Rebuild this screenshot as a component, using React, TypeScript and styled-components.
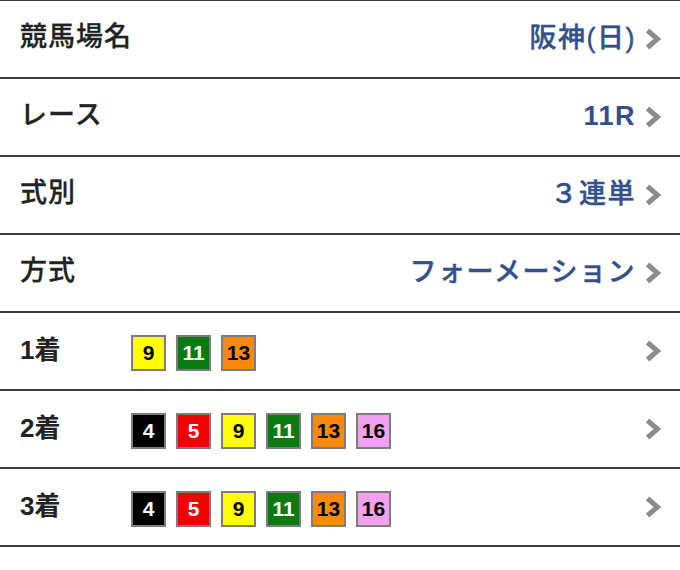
import React from "react";
import styled, { createGlobalStyle } from "styled-components";

const Global = createGlobalStyle`
  html, body { margin: 0; padding: 0; background: #fff; }
  body { font-family: "Noto Sans CJK JP", "Noto Sans", sans-serif; }
`;

const List = styled.div`
  border-top: 1px solid #3c3c3c;
  width: 680px;
`;

const Row = styled.div`
  height: 76px;
  border-bottom: 2px solid #3c3c3c;
  display: flex;
  align-items: center;
  padding: 0 19px 0 20px;
  box-sizing: content-box;
`;

const Label = styled.div<{ $fixed?: boolean }>`
  font-family: "Liberation Sans", "Noto Sans CJK JP", sans-serif;
  font-size: ${(p) => (p.$fixed ? "26px" : "27px")};
  font-weight: ${(p) => (p.$fixed ? 700 : 500)};
  letter-spacing: ${(p) => (p.$fixed ? "0" : "1px")};
  color: #222;
  line-height: 1;
  margin-top: -3px;
  -webkit-text-stroke: ${(p) => (p.$fixed ? "0" : "0.3px #222")};
  ${(p) => (p.$fixed ? "flex: 0 0 111px;" : "flex: 1 1 auto;")}
`;

const Value = styled.div`
  font-family: "Liberation Sans", "Noto Sans CJK JP", sans-serif;
  font-size: 27px;
  font-weight: 500;
  color: #32508c;
  letter-spacing: 1.5px;
  line-height: 1;
  margin-top: -1px;
  margin-right: -1px;
  -webkit-text-stroke: 0.4px #32508c;
`;

const Strong = styled.span`
  font-weight: 700;
  -webkit-text-stroke: 0;
`;

const Badges = styled.div`
  flex: 1 1 auto;
  display: flex;
  gap: 10px;
  margin-top: 4px;
`;

const Badge = styled.div<{ $bg: string; $fg: string }>`
  width: 31px;
  height: 32px;
  border: 2px solid #7d7d7d;
  background: ${(p) => p.$bg};
  color: ${(p) => p.$fg};
  display: flex;
  align-items: center;
  justify-content: center;
  font-family: "Liberation Sans", Arial, sans-serif;
  font-weight: 700;
  font-size: 21px;
`;

const Chevron = styled.svg`
  flex: 0 0 auto;
  width: 16px;
  height: 22px;
  margin-left: 10px;
`;

const colors: Record<number, [string, string]> = {
  4: ["#000000", "#ffffff"],
  5: ["#f20000", "#ffffff"],
  9: ["#ffff00", "#000000"],
  11: ["#0b7a10", "#ffffff"],
  13: ["#fb8a0c", "#000000"],
  16: ["#f2a0f2", "#000000"],
};

const Arrow = () => (
  <Chevron viewBox="0 0 16 22">
    <polyline
      points="2.5,2.5 12.5,11 2.5,19.5"
      fill="none"
      stroke="#8c8c8c"
      strokeWidth="5"
      strokeLinecap="butt"
      strokeLinejoin="miter"
    />
  </Chevron>
);

const settings: { label: string; value: React.ReactNode }[] = [
  { label: "競馬場名", value: "阪神(日)" },
  { label: "レース", value: <Strong>11R</Strong> },
  { label: "式別", value: "３連単" },
  { label: "方式", value: "フォーメーション" },
];

const places = [
  { label: "1着", nums: [9, 11, 13] },
  { label: "2着", nums: [4, 5, 9, 11, 13, 16] },
  { label: "3着", nums: [4, 5, 9, 11, 13, 16] },
];

export default function App() {
  return (
    <>
      <Global />
      <List>
        {settings.map((s) => (
          <Row key={s.label}>
            <Label>{s.label}</Label>
            <Value>{s.value}</Value>
            <Arrow />
          </Row>
        ))}
        {places.map((p) => (
          <Row key={p.label}>
            <Label $fixed>{p.label}</Label>
            <Badges>
              {p.nums.map((n) => (
                <Badge key={n} $bg={colors[n][0]} $fg={colors[n][1]}>
                  {n}
                </Badge>
              ))}
            </Badges>
            <Arrow />
          </Row>
        ))}
      </List>
    </>
  );
}
